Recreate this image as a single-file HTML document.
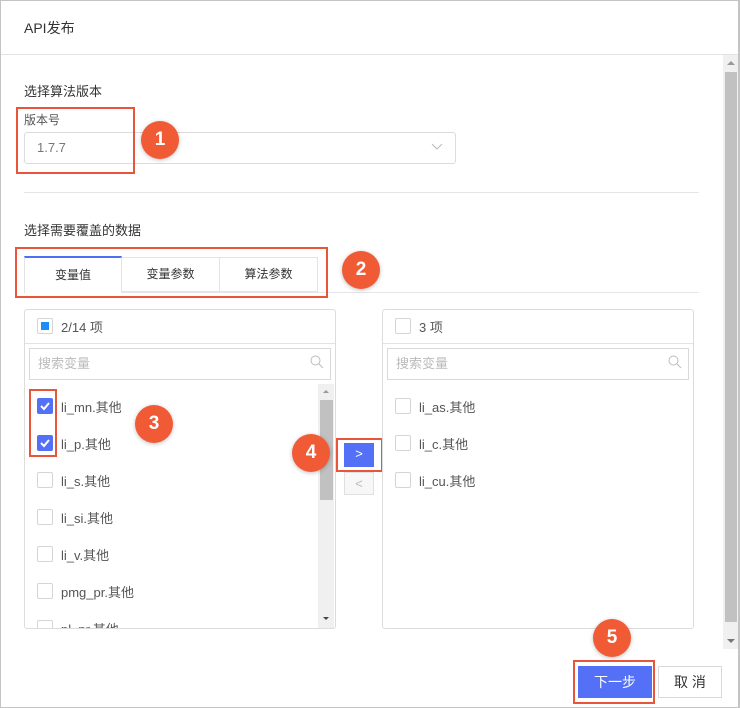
<!DOCTYPE html>
<html><head><meta charset="utf-8"><style>
*{box-sizing:border-box;margin:0;padding:0}
body{width:740px;height:708px;background:#fff;font-family:"Liberation Sans","Noto Sans CJK SC",sans-serif;color:#333;position:relative;overflow:hidden}
.a{position:absolute}
.frame{left:0;top:0;width:740px;height:708px;border:1px solid #c4c4c4;border-right:2px solid #c4c4c4}
.red{position:absolute;border:2px solid #e8553a}
.badge{position:absolute;width:38px;height:38px;border-radius:50%;background:#f05a35;color:#fff;font-weight:bold;font-size:19px;text-align:center;line-height:38px;box-shadow:0 1px 4px rgba(0,0,0,.25)}
.cb{position:absolute;width:16px;height:16px;border:1px solid #d5d5d5;border-radius:2px;background:#fff}
.cb.on{background:#5470f6;border-color:#5470f6}
.item{position:absolute;font-size:13px;color:#555}
.panel{position:absolute;border:1px solid #dcdcdc;border-radius:3px}
.search{position:absolute;border:1px solid #d9d9d9;height:32px;font-size:13px;color:#bbb;line-height:30px;padding-left:8px}
</style></head><body>
<div class="a frame"></div>
<div class="a" style="left:24px;top:18px;font-size:14px;color:#333">API发布</div>
<div class="a" style="left:1px;top:54px;width:737px;height:1px;background:#e3e3e3"></div>
<div class="a" style="left:723px;top:55px;width:15px;height:594px;background:#f0f0f0"></div>
<div class="a" style="left:725px;top:72px;width:12px;height:550px;background:#c1c1c1"></div>
<div class="a" style="left:727px;top:61px;width:0;height:0;border:4px solid transparent;border-bottom:4px solid #999;border-top:0"></div>
<div class="a" style="left:727px;top:639px;width:0;height:0;border:4px solid transparent;border-top:4px solid #777;border-bottom:0"></div>

<div class="a" style="left:24px;top:81px;font-size:13px;color:#333">选择算法版本</div>
<div class="a" style="left:24px;top:111px;font-size:12px;color:#555">版本号</div>
<div class="a" style="left:24px;top:132px;width:432px;height:32px;border:1px solid #dcdcdc;border-radius:3px"></div>
<div class="a" style="left:37px;top:140px;font-size:13px;color:#777">1.7.7</div>
<svg class="a" style="left:431px;top:143px" width="12" height="8"><path d="M1 1l5 5 5-5" stroke="#bbb" fill="none"/></svg>
<div class="red" style="left:16px;top:107px;width:119px;height:67px"></div>
<div class="badge" style="left:141px;top:121px">1</div>

<div class="a" style="left:24px;top:192px;width:675px;height:1px;background:#e6e6e6"></div>
<div class="a" style="left:24px;top:220px;font-size:13px;color:#333">选择需要覆盖的数据</div>
<div class="a" style="left:24px;top:292px;width:675px;height:1px;background:#e6e6e6"></div>
<div class="a" style="left:24px;top:256px;width:98px;height:37px;border-top:2px solid #4f6ef2;border-left:1px solid #e3e3e3;border-right:1px solid #e3e3e3;background:#fff;font-size:12px;text-align:center;line-height:34px">变量值</div>
<div class="a" style="left:122px;top:257px;width:98px;height:35px;border:1px solid #e3e3e3;border-left:0;font-size:12px;text-align:center;line-height:33px">变量参数</div>
<div class="a" style="left:220px;top:257px;width:98px;height:35px;border:1px solid #e3e3e3;border-left:0;font-size:12px;text-align:center;line-height:33px">算法参数</div>
<div class="red" style="left:15px;top:247px;width:313px;height:51px"></div>
<div class="badge" style="left:342px;top:251px">2</div>

<div class="panel" style="left:24px;top:309px;width:312px;height:320px"></div>
<div class="a" style="left:25px;top:343px;width:310px;height:1px;background:#e3e3e3"></div>
<div class="cb" style="left:37px;top:318px"></div>
<div class="a" style="left:41px;top:322px;width:8px;height:8px;background:#1e8cf5"></div>
<div class="item" style="left:61px;top:317px">2/14 项</div>
<div class="search" style="left:29px;top:348px;width:302px">搜索变量</div>
<svg class="a" style="left:310px;top:355px" width="14" height="14"><circle cx="5.5" cy="5.5" r="4.5" stroke="#bbb" fill="none"/><path d="M9 9l4 4" stroke="#bbb"/></svg>
<div class="a" style="left:318px;top:384px;width:16px;height:244px;background:#f0f0f0"></div>
<div class="a" style="left:320px;top:400px;width:13px;height:100px;background:#c1c1c1"></div>
<div class="a" style="left:323px;top:390px;border:3.5px solid transparent;border-bottom:3.5px solid #999;border-top:0"></div>
<div class="a" style="left:323px;top:617px;border:3.5px solid transparent;border-top:3.5px solid #444;border-bottom:0"></div>
<div class="cb on" style="left:37px;top:398px"></div>
<svg class="a" style="left:39px;top:400px" width="12" height="12"><path d="M2 6l3 3 5-6" stroke="#fff" stroke-width="2" fill="none"/></svg>
<div class="item" style="left:61px;top:397px">li_mn.其他</div>
<div class="cb on" style="left:37px;top:435px"></div>
<svg class="a" style="left:39px;top:437px" width="12" height="12"><path d="M2 6l3 3 5-6" stroke="#fff" stroke-width="2" fill="none"/></svg>
<div class="item" style="left:61px;top:434px">li_p.其他</div>
<div class="cb" style="left:37px;top:472px"></div><div class="item" style="left:61px;top:471px">li_s.其他</div>
<div class="cb" style="left:37px;top:509px"></div><div class="item" style="left:61px;top:508px">li_si.其他</div>
<div class="cb" style="left:37px;top:546px"></div><div class="item" style="left:61px;top:545px">li_v.其他</div>
<div class="cb" style="left:37px;top:583px"></div><div class="item" style="left:61px;top:582px">pmg_pr.其他</div>
<div class="a" style="left:25px;top:618px;width:292px;height:10px;overflow:hidden"><div class="cb" style="left:12px;top:2px"></div><div class="item" style="left:36px;top:1px">pl_pr.其他</div></div>
<div class="red" style="left:29px;top:389px;width:28px;height:68px"></div>
<div class="badge" style="left:135px;top:405px">3</div>
<div class="badge" style="left:292px;top:434px">4</div>

<div class="a" style="left:344px;top:443px;width:30px;height:24px;background:#5470f6;color:#fff;text-align:center;line-height:22px;font-size:13px">&gt;</div>
<div class="red" style="left:336px;top:438px;width:47px;height:34px"></div>
<div class="a" style="left:344px;top:472px;width:30px;height:23px;border:1px solid #e0e0e0;background:#f7f7f7;color:#bbb;text-align:center;line-height:21px;font-size:13px">&lt;</div>

<div class="panel" style="left:382px;top:309px;width:312px;height:320px"></div>
<div class="a" style="left:383px;top:343px;width:310px;height:1px;background:#e3e3e3"></div>
<div class="cb" style="left:395px;top:318px"></div>
<div class="item" style="left:419px;top:317px">3 项</div>
<div class="search" style="left:387px;top:348px;width:302px">搜索变量</div>
<svg class="a" style="left:668px;top:355px" width="14" height="14"><circle cx="5.5" cy="5.5" r="4.5" stroke="#bbb" fill="none"/><path d="M9 9l4 4" stroke="#bbb"/></svg>
<div class="cb" style="left:395px;top:398px"></div><div class="item" style="left:419px;top:397px">li_as.其他</div>
<div class="cb" style="left:395px;top:435px"></div><div class="item" style="left:419px;top:434px">li_c.其他</div>
<div class="cb" style="left:395px;top:472px"></div><div class="item" style="left:419px;top:471px">li_cu.其他</div>

<div class="badge" style="left:593px;top:619px">5</div>
<div class="a" style="left:578px;top:666px;width:74px;height:32px;background:#5470f6;color:#fff;font-size:14px;text-align:center;line-height:32px">下一步</div>
<div class="red" style="left:573px;top:660px;width:82px;height:44px"></div>
<div class="a" style="left:658px;top:666px;width:64px;height:32px;border:1px solid #d9d9d9;font-size:14px;text-align:center;line-height:30px;color:#333">取 消</div>
</body></html>
